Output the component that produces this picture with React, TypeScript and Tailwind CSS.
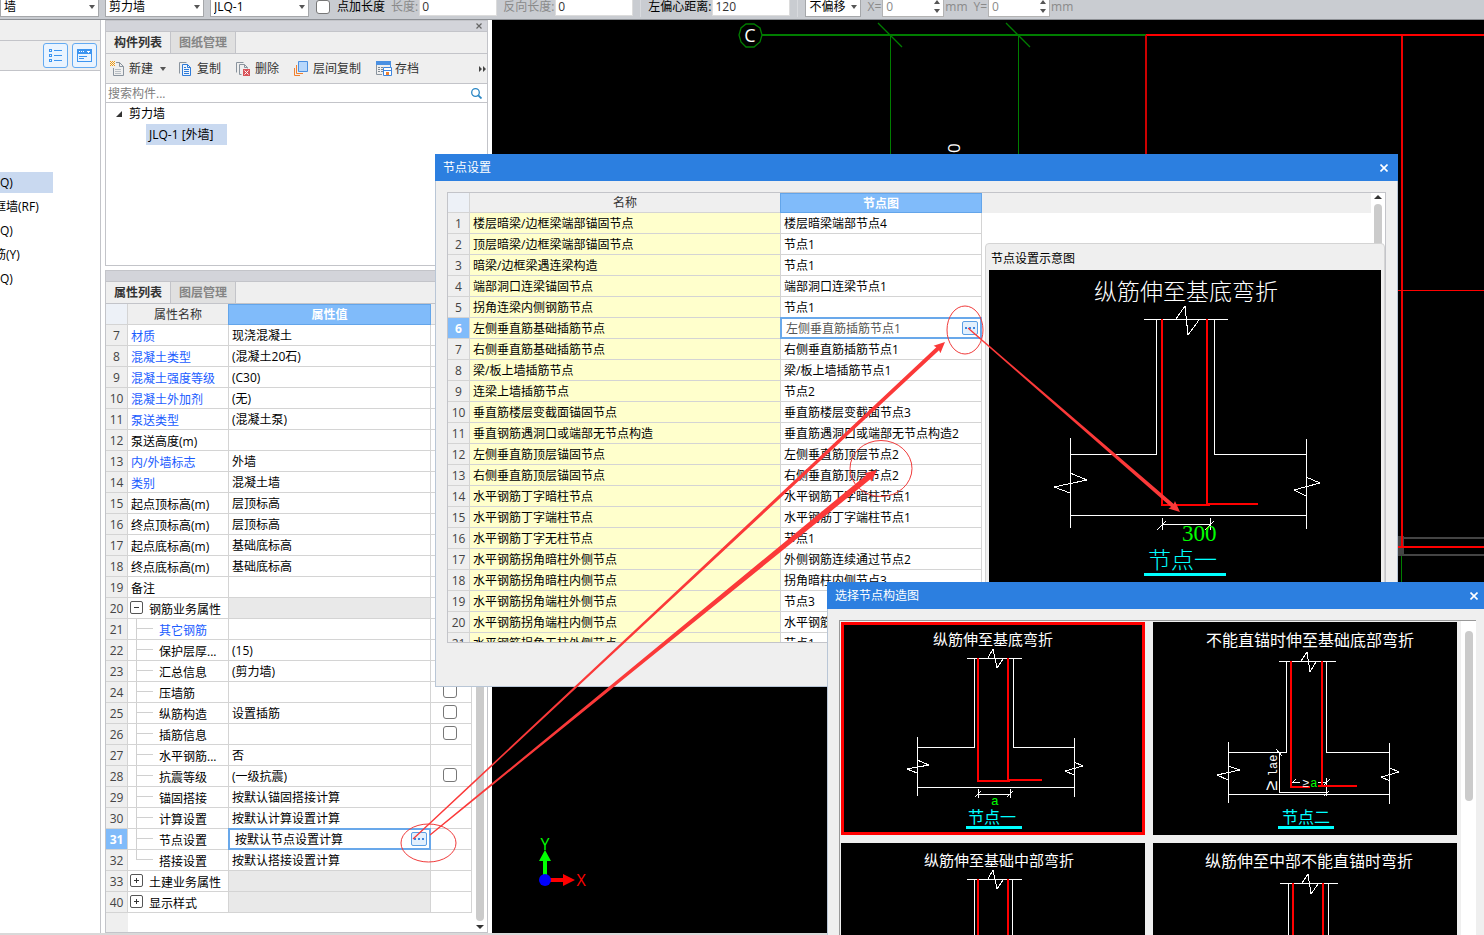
import type { ReactNode } from "react";

type PropertyRow = {
  no: number;
  name: string;
  value?: string;
  link?: boolean;
  group?: "open" | "closed";
  child?: boolean;
  last?: boolean;
  check?: boolean;
  selected?: boolean;
};

const properties: PropertyRow[] = [
  { no: 7, name: "材质", value: "现浇混凝土", link: true },
  { no: 8, name: "混凝土类型", value: "(混凝土20石)", link: true },
  { no: 9, name: "混凝土强度等级", value: "(C30)", link: true },
  { no: 10, name: "混凝土外加剂", value: "(无)", link: true },
  { no: 11, name: "泵送类型", value: "(混凝土泵)", link: true },
  { no: 12, name: "泵送高度(m)" },
  { no: 13, name: "内/外墙标志", value: "外墙", link: true },
  { no: 14, name: "类别", value: "混凝土墙", link: true },
  { no: 15, name: "起点顶标高(m)", value: "层顶标高" },
  { no: 16, name: "终点顶标高(m)", value: "层顶标高" },
  { no: 17, name: "起点底标高(m)", value: "基础底标高" },
  { no: 18, name: "终点底标高(m)", value: "基础底标高" },
  { no: 19, name: "备注" },
  { no: 20, name: "钢筋业务属性", group: "open" },
  { no: 21, name: "其它钢筋", link: true, child: true },
  { no: 22, name: "保护层厚...", value: "(15)", child: true },
  { no: 23, name: "汇总信息", value: "(剪力墙)", child: true },
  { no: 24, name: "压墙筋", child: true, check: true },
  { no: 25, name: "纵筋构造", value: "设置插筋", child: true, check: true },
  { no: 26, name: "插筋信息", child: true, check: true },
  { no: 27, name: "水平钢筋...", value: "否", child: true },
  { no: 28, name: "抗震等级", value: "(一级抗震)", child: true, check: true },
  { no: 29, name: "锚固搭接", value: "按默认锚固搭接计算", child: true },
  { no: 30, name: "计算设置", value: "按默认计算设置计算", child: true },
  { no: 31, name: "节点设置", value: "按默认节点设置计算", child: true, selected: true },
  { no: 32, name: "搭接设置", value: "按默认搭接设置计算", child: true, last: true },
  { no: 33, name: "土建业务属性", group: "closed" },
  { no: 40, name: "显示样式", group: "closed" },
];

const nodes = [
  ["楼层暗梁/边框梁端部锚固节点", "楼层暗梁端部节点4"],
  ["顶层暗梁/边框梁端部锚固节点", "节点1"],
  ["暗梁/边框梁遇连梁构造", "节点1"],
  ["端部洞口连梁锚固节点", "端部洞口连梁节点1"],
  ["拐角连梁内侧钢筋节点", "节点1"],
  ["左侧垂直筋基础插筋节点", "左侧垂直筋插筋节点1"],
  ["右侧垂直筋基础插筋节点", "右侧垂直筋插筋节点1"],
  ["梁/板上墙插筋节点", "梁/板上墙插筋节点1"],
  ["连梁上墙插筋节点", "节点2"],
  ["垂直筋楼层变截面锚固节点", "垂直筋楼层变截面节点3"],
  ["垂直钢筋遇洞口或端部无节点构造", "垂直筋遇洞口或端部无节点构造2"],
  ["左侧垂直筋顶层锚固节点", "左侧垂直筋顶层节点2"],
  ["右侧垂直筋顶层锚固节点", "右侧垂直筋顶层节点2"],
  ["水平钢筋丁字暗柱节点", "水平钢筋丁字暗柱节点1"],
  ["水平钢筋丁字端柱节点", "水平钢筋丁字端柱节点1"],
  ["水平钢筋丁字无柱节点", "节点1"],
  ["水平钢筋拐角暗柱外侧节点", "外侧钢筋连续通过节点2"],
  ["水平钢筋拐角暗柱内侧节点", "拐角暗柱内侧节点3"],
  ["水平钢筋拐角端柱外侧节点", "节点3"],
  ["水平钢筋拐角端柱内侧节点", "水平钢筋拐角端柱内侧节点1"],
  ["水平钢筋拐角无柱外侧节点", "节点1"],
];

const Caret = ({ up = false }: { up?: boolean }) => (
  <svg width="6" height="4" viewBox="0 0 6 4" className="shrink-0 fill-[#555]">
    <path d={up ? "M0 4L3 0L6 4Z" : "M0 0H6L3 4Z"} />
  </svg>
);

const ToolSelect = ({ label, value, className }: { label: string; value: string; className: string }) => (
  <div className={`relative flex shrink-0 items-center ${className}`}>
    <select
      aria-label={label}
      className="h-[21px] w-full appearance-none border border-[#a5a7aa] bg-white pl-[3px] leading-[19px] text-black"
    >
      <option>{value}</option>
    </select>
    <span className="pointer-events-none absolute right-[4px]">
      <Caret />
    </span>
  </div>
);

const ToolInput = ({ label, value, dim = false }: { label: string; value: string; dim?: boolean }) => (
  <label className={`flex shrink-0 items-center ${dim ? "text-[#8a8a8a]" : "text-black"}`}>
    {label}
    <input
      defaultValue={value}
      className="ml-px h-[18px] w-[78px] border border-[#dcdcdc] bg-white pl-[2px] text-[#333]"
    />
  </label>
);

const SpinInput = ({ label, value }: { label: string; value: string }) => (
  <label className="flex shrink-0 items-center text-[#8a8a8a]">
    {label}=
    <span className="relative ml-px flex items-center">
      <input defaultValue={value} className="h-[21px] w-[62px] border border-[#b3b3b3] bg-white pl-[3px]" />
      <span className="pointer-events-none absolute right-[4px] flex flex-col gap-[5px]">
        <Caret up />
        <Caret />
      </span>
    </span>
    <span className="ml-px">mm</span>
  </label>
);

const TopBar = () => (
  <header className="flex h-[20px] shrink-0 items-end overflow-hidden border-b border-[#8d9095] bg-[#c9ccd1] pb-[2px]">
    <div className="flex h-[21px] shrink-0 items-center gap-[6px]">
      <ToolSelect label="构件类型" value="墙" className="w-[99px]" />
      <ToolSelect label="构件类别" value="剪力墙" className="w-[99px]" />
      <ToolSelect label="构件名称" value="JLQ-1" className="w-[99px]" />
      <label className="flex shrink-0 items-center gap-[7px] pl-px">
        <input type="checkbox" className="h-[14px] w-[14px] appearance-none rounded-[3px] border border-[#777] bg-white" />
        点加长度
      </label>
      <ToolInput label="长度:" value="0" dim />
      <ToolInput label="反向长度:" value="0" dim />
      <span className="mx-px h-full w-px bg-[#d8dade]" />
      <ToolInput label="左偏心距离:" value="120" />
      <span className="mx-px h-full w-px bg-[#d8dade]" />
      <ToolSelect label="偏移方式" value="不偏移" className="w-[56px]" />
      <SpinInput label="X" value="0" />
      <SpinInput label="Y" value="0" />
    </div>
  </header>
);

const CategoryPanel = () => (
  <aside className="flex w-[101px] shrink-0 flex-col border-r border-[#c3c4c9] bg-white">
    <div className="h-[21px] border-b border-[#c3c4c9] bg-[#efefef]" />
    <div className="flex h-[30px] items-center justify-end gap-[4px] border-b border-[#c3c4c9] bg-[#efefef] pr-[3px]">
      <button aria-label="列表视图" className="flex h-[25px] w-[25px] items-center justify-center rounded-[3px] border border-[#63aaf2] bg-[#eaf4ff]">
        <svg width="13" height="14" viewBox="0 0 13 14" fill="none" stroke="#3d95f0" shapeRendering="crispEdges">
          <path d="M.5.5h2v2h-2zM.5 5.5h2v2h-2zM.5 10.5h2v2h-2zM5 1.5h8M5 6.5h8M5 11.5h8" />
        </svg>
      </button>
      <button aria-label="卡片视图" className="flex h-[25px] w-[25px] items-center justify-center rounded-[3px] border border-[#63aaf2] bg-[#eaf4ff]">
        <svg width="15" height="13" viewBox="0 0 15 13" fill="none" stroke="#3d95f0" shapeRendering="crispEdges">
          <path d="M.5.5h14v12h-14z" />
          <path d="M1 1h13v4H1z" fill="#3d95f0" stroke="none" />
          <path d="M2 2.500h1M4 2.500h1M6 2.500h1M10 2.500h3M11 3.500h1" stroke="#fff" />
          <path d="M2 7.500h8M2 9.500h5" />
        </svg>
      </button>
    </div>
    <ul className="mt-[101px] -ml-[6px] overflow-hidden leading-[21px]">
      <li className="mb-[3px] h-[21px] w-[59px] bg-[#c9d9f0] pl-[6px]">Q)</li>
      <li className="mb-[3px] h-[21px]">框墙(RF)</li>
      <li className="mb-[3px] h-[21px] pl-[6px]">Q)</li>
      <li className="mb-[3px] h-[21px]">筋(Y)</li>
      <li className="h-[21px] pl-[6px]">Q)</li>
    </ul>
  </aside>
);

const PanelTabs = ({ tabs, closable = false }: { tabs: string[]; closable?: boolean }) => (
  <>
    <div className="flex h-[11px] shrink-0 items-center justify-end border-b border-[#c3c4c9] bg-[#d3d4da] pr-[5px]">
      {closable && (
        <button aria-label="关闭面板">
          <svg width="6" height="6" viewBox="0 0 6 6" stroke="#666" strokeWidth="1.2">
            <path d="M.5.5L5.5 5.5M5.5.5L.5 5.5" />
          </svg>
        </button>
      )}
    </div>
    <div className="flex h-[22px] shrink-0 border-b border-[#c3c4c9] bg-[#efefef] font-bold">
      <button className="w-[65px] border-r border-[#c3c4c9] text-[#333]">{tabs[0]}</button>
      <button className="w-[65px] border-r border-[#c3c4c9] bg-[#e0e0e0] text-[#858585]">{tabs[1]}</button>
    </div>
  </>
);

const NewIcon = () => (
  <svg width="16" height="16" viewBox="0 0 16 16" fill="none">
    <path d="M3.500 7v7.500h10V5.500l-4-4H6" stroke="#8a949e" />
    <path d="M9.500 1.500v4h4" stroke="#8a949e" />
    <path d="M5 8.500h6M5 10.500h6M5 12.500h6" stroke="#b8bec4" />
    <path d="M0 .5h1M2 .5h1M4 .5h1M1 1.500h1M3 1.500h1M0 2.500h1M2 2.500h1M4 2.500h1M1 3.500h1M3 3.500h1M0 4.500h1M2 4.500h1M4 4.500h1" stroke="#f09a10" />
  </svg>
);

const CopyIcon = () => (
  <svg width="16" height="16" viewBox="0 0 16 16" fill="none">
    <path d="M1.500 12.500v-11h7" stroke="#8a949e" />
    <path d="M4.500 3.500h5l3 3v8h-8z" stroke="#2f7bd8" fill="#eef5fd" />
    <path d="M9.500 3.500v3h3M6 8.500h5M6 10.500h5M6 12.500h5M6 6.500h2" stroke="#2f7bd8" />
  </svg>
);

const DeleteIcon = () => (
  <svg width="16" height="16" viewBox="0 0 16 16" fill="none">
    <path d="M.5 11.500v-10h7M3.500 13.500v-10h5l3 3v1M3.500 13.500h2M8.500 3.500v3h3" stroke="#8a949e" />
    <path d="M7 8h7v7H7z" fill="#d9545a" />
    <path d="M8.500 9.500l4 4M12.500 9.500l-4 4" stroke="#fff" />
  </svg>
);

const LayerIcon = () => (
  <svg width="16" height="16" viewBox="0 0 16 16" fill="none">
    <path d="M4.500.5h9v10h-9z" fill="#b7d7fb" stroke="#4a8fe0" />
    <path d="M2.500 4v8.500H9" stroke="#f08030" />
    <path d="M.5 7v7.500H6" stroke="#f08030" />
  </svg>
);

const ArchiveIcon = () => (
  <svg width="16" height="16" viewBox="0 0 16 16" fill="none">
    <path d="M.5 1v12.500H6" stroke="#8a949e" />
    <path d="M0 0h15v4H0z" fill="#4a90e2" />
    <path d="M14.500 4v2" stroke="#4a90e2" />
    <path d="M2 6.500h5M2 8.500h5M2 10.500h5" stroke="#7d8790" strokeDasharray="2 1" />
    <path d="M7.500 6.500h8v8h-8z" fill="#fff" stroke="#3f86de" />
    <path d="M8 9.500h7" stroke="#3f86de" />
    <path d="M10 11h3v3h-3z" fill="#f08030" />
  </svg>
);

const ToolButton = ({ icon, children }: { icon: ReactNode; children: ReactNode }) => (
  <button className="flex shrink-0 items-center gap-[3px] text-[#333]">
    {icon}
    {children}
  </button>
);

const ComponentPanel = () => (
  <section className="flex h-[246px] shrink-0 flex-col border border-[#c3c4c9] bg-white">
    <PanelTabs tabs={["构件列表", "图纸管理"]} closable />
    <div className="flex h-[30px] shrink-0 items-center gap-[15px] border-b border-[#c3c4c9] bg-[#efefef] pl-[4px]">
      <ToolButton icon={<NewIcon />}>
        新建
        <span className="ml-[4px] -mr-[3px]">
          <Caret />
        </span>
      </ToolButton>
      <ToolButton icon={<CopyIcon />}>复制</ToolButton>
      <ToolButton icon={<DeleteIcon />}>删除</ToolButton>
      <ToolButton icon={<LayerIcon />}>层间复制</ToolButton>
      <ToolButton icon={<ArchiveIcon />}>存档</ToolButton>
      <button aria-label="更多" className="ml-auto">
        <svg width="8" height="6" viewBox="0 0 8 6" className="fill-[#444]">
          <path d="M0 0L3 3L0 6ZM4 0L7 3L4 6Z" />
        </svg>
      </button>
    </div>
    <div className="flex h-[19px] shrink-0 items-center border-b border-[#c3c4c9] pr-[5px]">
      <input
        aria-label="搜索构件"
        placeholder="搜索构件..."
        className="h-[18px] min-w-0 flex-1 pt-[2px] pl-[2px] outline-none placeholder:text-[#808080]"
      />
      <button aria-label="搜索">
        <svg width="11" height="11" viewBox="0 0 11 11" fill="none" stroke="#2a86c4">
          <circle cx="4.500" cy="4.500" r="3.800" strokeWidth="1.300" />
          <path d="M7.300 7.300L10.500 10.500" strokeWidth="1.800" />
        </svg>
      </button>
    </div>
    <ul className="leading-[21px]">
      <li className="flex items-center gap-[7px] pl-[10px]">
        <svg width="6" height="6" viewBox="0 0 6 6" className="fill-[#333]">
          <path d="M6 0V6H0Z" />
        </svg>
        剪力墙
      </li>
      <li className="ml-[40px] w-[81px] bg-[#c9d9f0] pl-[3px]">JLQ-1 [外墙]</li>
    </ul>
  </section>
);

const EllipsisButton = () => (
  <button
    aria-label="选择"
    className="flex h-[14px] w-[16px] shrink-0 items-center justify-center rounded-[2px] border border-[#5b9fe4] bg-[#e3f0fd]"
  >
    <svg width="10" height="2" viewBox="0 0 10 2" className="fill-[#3f86de]">
      <path d="M0 0h2v2H0zM4 0h2v2H4zM8 0h2v2H8z" />
    </svg>
  </button>
);

const TreeLines = ({ last = false }: { last?: boolean }) => (
  <svg width="31" height="20" viewBox="0 0 31 20" fill="none" stroke="#d0d0d0" shapeRendering="crispEdges" className="shrink-0">
    <path d={last ? "M8.500 0V9.500H25" : "M8.500 0V20M8.500 9.500H25"} />
  </svg>
);

const PropertyName = ({ row }: { row: PropertyRow }) => (
  <div className={`flex h-[20px] items-center whitespace-nowrap ${row.link ? "text-[#1a5cff]" : "text-black"}`}>
    {row.child && <TreeLines last={row.last} />}
    {row.group && (
      <button
        aria-label={row.group === "open" ? "收起" : "展开"}
        className="mr-[6px] mb-[2px] ml-[2px] flex h-[13px] w-[13px] items-center justify-center rounded-[2px] border border-[#555]"
      >
        <svg width="5" height="5" viewBox="0 0 5 5" stroke="#333" shapeRendering="crispEdges">
          <path d={row.group === "open" ? "M0 2.500H5" : "M0 2.500H5M2.500 0V5"} />
        </svg>
      </button>
    )}
    <span className={row.child || row.group ? "pt-[2px]" : "pt-[2px] pl-[3px]"}>{row.name}</span>
  </div>
);

const PropertyPanel = () => (
  <section className="flex min-h-0 flex-1 flex-col border border-[#c3c4c9] bg-white">
    <PanelTabs tabs={["属性列表", "图层管理"]} />
    <div className="flex min-h-0 flex-1 overflow-hidden">
      <div className="flex flex-1 flex-col">
        <table className="w-[366px] table-fixed border-separate border-spacing-0 leading-[19px]">
          <colgroup>
            <col className="w-[22px]" />
            <col className="w-[101px]" />
            <col className="w-[202px]" />
            <col className="w-[41px]" />
          </colgroup>
          <thead>
            <tr className="h-[21px]">
              <th className="border-r border-b border-[#d4d4d4] bg-[#edf1f7] p-0" />
              <th className="border-r border-b border-[#d4d4d4] bg-[#efefef] p-0 pt-px font-normal text-[#333]">属性名称</th>
              <th className="p-0 font-bold text-white">
                <div className="-ml-px h-[21px] border border-[#63a5ea] bg-[#80bbfa]">属性值</div>
              </th>
              <th className="border-r border-b border-[#d4d4d4] bg-[#efefef] p-0" />
            </tr>
          </thead>
          <tbody>
            {properties.map((row) => (
              <tr key={row.no} className="h-[21px]">
                <td
                  className={`border-r border-b border-[#d4d4d4] p-0 pt-px text-center ${
                    row.selected ? "bg-[#80bbfa] font-bold text-white" : "bg-[#efefef] text-[#444]"
                  }`}
                >
                  {row.no}
                </td>
                <td className="border-r border-b border-[#d4d4d4] p-0">
                  <PropertyName row={row} />
                </td>
                {row.selected ? (
                  <td className="p-0">
                    <div className="-mt-px -ml-px flex h-[22px] items-center border-2 border-[#69a8ea] pr-[2px] pl-[5px]">
                      <input aria-label={row.name} defaultValue={row.value} className="h-[18px] min-w-0 flex-1 pt-px outline-none" />
                      <EllipsisButton />
                    </div>
                  </td>
                ) : (
                  <td className={`border-r border-b border-[#d4d4d4] p-0 pt-px pl-[3px] ${row.group ? "bg-[#e9e9e9]" : ""}`}>
                    {row.value}
                  </td>
                )}
                <td className="border-r border-b border-[#d4d4d4] p-0">
                  {row.check && (
                    <input
                      type="checkbox"
                      aria-label={row.name}
                      className="mb-[2px] ml-[12px] block h-[14px] w-[14px] appearance-none rounded-[3px] border border-[#777]"
                    />
                  )}
                </td>
              </tr>
            ))}
          </tbody>
        </table>
        <div className="w-[22px] flex-1 bg-[#efefef]" />
      </div>
      <div className="flex w-[15px] shrink-0 flex-col items-center gap-[4px] pb-[3px]">
        <div className="w-[8px] flex-1 rounded-b-full bg-[#cbcbcb]" />
        <svg width="8" height="4" viewBox="0 0 8 4" className="fill-[#333]">
          <path d="M0 0H8L4 4Z" />
        </svg>
      </div>
    </div>
  </section>
);

const ModelCanvas = () => (
  <main className="min-w-0 flex-1 overflow-hidden bg-black">
    <svg width="992" height="913" viewBox="492 20 992 913" fill="none" className="font-['Open_Sans',sans-serif]">
      <g stroke="#007d00">
        <path d="M762 35H1146" strokeWidth="2" />
        <path d="M890.500 35V160M1018.500 35V160M1401.500 546V600" />
        <path d="M878 23L902 47M1006 23L1030 47" strokeWidth="1.300" />
        <path d="M746 24h8l6 4l2 7l-2 7l-6 5h-8l-5-5l-2-7l2-7z" strokeWidth="1.300" />
      </g>
      <text x="750" y="42" textAnchor="middle" fontSize="18" fill="#fff">C</text>
      <text transform="translate(960 153) rotate(-90)" fontSize="17" fill="#fff">0</text>
      <path d="M1398 536h6v20h-6z" fill="#444" />
      <path d="M1404 538H1484M1404 555H1484" stroke="#444" strokeWidth="2" />
      <g stroke="#f00" shapeRendering="crispEdges">
        <path d="M1146 35H1484" strokeWidth="2" />
        <path d="M1146 35V160" stroke="#c00" strokeWidth="2" />
        <path d="M1402 36V546" stroke="#e00" strokeWidth="2" />
        <path d="M1390 290.500H1484" />
        <path d="M1390 546.500H1484" strokeWidth="2" />
      </g>
      <path d="M543 876V861h-4L545 850l6 11h-4v15z" fill="#0f0" />
      <path d="M549 878h14v-4l12 6l-12 6v-4h-14z" fill="#f00" />
      <circle cx="545" cy="880" r="6" fill="#00f" />
      <text x="545" y="850" textAnchor="middle" fontSize="16" fill="#0f0">Y</text>
      <text x="581" y="886" textAnchor="middle" fontSize="16" fill="#f00">X</text>
    </svg>
  </main>
);

type DialogProps = { title: string; className: string; children: ReactNode };

const Dialog = ({ title, className, children }: DialogProps) => (
  <div role="dialog" aria-label={title} className={`absolute flex flex-col bg-[#efefef] ${className}`}>
    <div className="flex h-[27px] shrink-0 items-center justify-between bg-[#2c7fe0] pr-[10px] pl-[8px] text-white">
      <h2 className="pt-px">{title}</h2>
      <button aria-label="关闭">
        <svg width="8" height="8" viewBox="0 0 8 8" stroke="#fff" strokeWidth="1.600">
          <path d="M.5.5L7.500 7.500M7.500.5L.5 7.500" />
        </svg>
      </button>
    </div>
    <div className="flex-1 border-x border-b border-[#b9c6d6] px-[11px] pt-[11px]">{children}</div>
  </div>
);

const NodePreview = () => (
  <svg width="392" height="364" viewBox="0 0 392 364" fill="none" className="bg-black font-['Noto_Sans_CJK_SC',sans-serif]">
    <text x="105" y="30" fontSize="23" fill="#fff" className="font-light">纵筋伸至基底弯折</text>
    <g stroke="#fff" shapeRendering="crispEdges">
      <path d="M155 49.500H239M167.500 49V184.500H81M225.500 49V184.500H318M81.500 168V258M317.500 169V259M81 245.500H318" />
      <path d="M173.500 248V260M221.500 248V260M173 254.500H222M168 260l9-9M216 260l9-9" />
      <path d="M187 49L196 36L199 65L210 50M81 203l17 7l-33 7l16 6M317 207l14 6l-26 7l12 6" />
    </g>
    <path d="M173 49V235H221M218 49V234H269" stroke="#f00" strokeWidth="2" shapeRendering="crispEdges" />
    <text x="193" y="271" fontSize="23" fill="#0f0" className="font-['Liberation_Serif',serif]">300</text>
    <text x="159" y="298" fontSize="23" fill="#0ff" className="font-light">节点一</text>
    <path d="M155 304.500H237" stroke="#0ff" strokeWidth="3" />
  </svg>
);

const NodeDialog = () => (
  <Dialog title="节点设置" className="top-[154px] left-[435px] h-[533px] w-[963px]">
    <div className="relative flex h-[451px] overflow-hidden border border-[#c3c4c9] bg-white">
      <table className="w-[534px] shrink-0 table-fixed self-start border-separate border-spacing-0 leading-[19px]">
        <colgroup>
          <col className="w-[22px]" />
          <col className="w-[311px]" />
          <col className="w-[201px]" />
        </colgroup>
        <thead>
          <tr className="h-[20px]">
            <th className="border-r border-b border-[#d4d4d4] bg-[#edf1f7] p-0" />
            <th className="border-r border-b border-[#d4d4d4] bg-[#efefef] p-0 pt-px leading-[18px] font-normal text-[#333]">名称</th>
            <th className="p-0 font-bold text-white">
              <div className="-ml-px h-[20px] border border-[#63a5ea] bg-[#80bbfa]">节点图</div>
            </th>
          </tr>
        </thead>
        <tbody>
          {nodes.map(([name, value], i) => {
            const selected = i === 5;
            return (
              <tr key={name} className="h-[21px]">
                <td
                  className={`border-r border-b border-[#d4d4d4] p-0 pt-px text-center ${
                    selected ? "bg-[#80bbfa] font-bold text-white" : "bg-[#efefef] text-[#444]"
                  }`}
                >
                  {i + 1}
                </td>
                <td className="border-r border-b border-[#d4d4d4] bg-[#ffffcc] p-0 pt-px pl-[3px]">{name}</td>
                {selected ? (
                  <td className="p-0">
                    <div className="-mt-px -ml-px flex h-[22px] items-center border-2 border-[#69a8ea] pr-[2px] pl-[4px]">
                      <input aria-label={name} defaultValue={value} className="h-[18px] min-w-0 flex-1 pt-px text-[#555] outline-none" />
                      <EllipsisButton />
                    </div>
                  </td>
                ) : (
                  <td className="border-r border-b border-[#d4d4d4] p-0 pt-px pl-[3px] whitespace-nowrap">{value}</td>
                )}
              </tr>
            );
          })}
        </tbody>
      </table>
      <div className="h-[20px] flex-1 bg-[#efefef]" />
      <div className="flex w-[14px] shrink-0 flex-col items-center gap-[5px] pt-[2px]">
        <svg width="8" height="4" viewBox="0 0 8 4" className="fill-[#333]">
          <path d="M0 4L4 0L8 4Z" />
        </svg>
        <div className="w-[8px] flex-1 rounded-t-full bg-[#cbcbcb]" />
      </div>
      {/* preview floats above the empty part of the table */}
      <div className="absolute top-[50px] right-0 bottom-0 w-[400px] rounded-t-[4px] border border-[#d4d4d4] bg-[#efefef] px-[3px]">
        <p className="h-[26px] pl-[2px] leading-[30px]">节点设置示意图</p>
        <NodePreview />
      </div>
    </div>
  </Dialog>
);

type Section = {
  title: string;
  titleX: number;
  size: number;
  outline: string;
  rebar: string;
  caption?: string;
};

const sections: Section[] = [
  {
    title: "纵筋伸至基底弯折",
    titleX: 92,
    size: 15,
    outline:
      "M126 36.500H181M147 36L152 27L156 46L162 37M133.500 36V125.500H76M172.500 36V125.500H234M76.500 115V174M233.500 116V175M76 165.500H234M76 138l12 5l-22 4l10 4M233 140l9 4l-18 5l9 4M137.500 167V176M169.500 167V176M137 172.500H170M134 175l6-6M166 175l6-6",
    rebar: "M137 36V159H169M167 36V158H201",
    caption: "节点一",
  },
  {
    title: "不能直锚时伸至基础底部弯折",
    titleX: 53,
    size: 16,
    outline:
      "M126 39.500H183M148 39L154 30L157 50L163 40M133.500 39V130.500H75M173.500 39V130.500H237M75.500 120V181M236.500 121V182M75 172.500H237M75 144l12 4l-23 5l11 5M237 146l9 4l-18 5l9 4M126.500 130V170.500H174M173.500 156V174M123 127l6 7M171 174l5-5M138 160.500H147M165 160.500H174M137 163l6-6M171 163l6-6",
    rebar: "M138 39V165H157M169 39V164M165 164H204",
    caption: "节点二",
  },
  {
    title: "纵筋伸至基础中部弯折",
    titleX: 83,
    size: 15,
    outline: "M126 36.500H181M147 36L152 27L156 46L162 37M133.500 36V125.500H76M171.500 36V125.500H234",
    rebar: "M137 36V145H169M167 36V144H201",
  },
  {
    title: "纵筋伸至中部不能直锚时弯折",
    titleX: 52,
    size: 16,
    outline: "M127 40.500H185M149 40L155 31L158 51L165 41M135.500 40V130.500H75M175.500 40V130.500H237",
    rebar: "M140 40V150H160M170 40V149H204",
  },
];

const SectionTile = ({ section, index }: { section: Section; index: number }) => (
  <button className="block h-[213px] w-[304px] bg-black">
    <svg width="304" height="213" viewBox="0 0 304 213" fill="none" className="font-['Noto_Sans_CJK_SC',sans-serif]">
      <text x={section.titleX} y={index % 2 ? 24 : 23} fontSize={section.size} fill="#fff">
        {section.title}
      </text>
      <path d={section.outline} stroke="#fff" shapeRendering="crispEdges" />
      <path d={section.rebar} stroke="#f00" strokeWidth="2" shapeRendering="crispEdges" />
      {index === 0 && (
        <text x="150" y="183" fontSize="13" fill="#0f0" className="font-['Liberation_Mono',monospace]">a</text>
      )}
      {index === 1 && (
        <g fontSize="12" fill="#fff" className="font-['Liberation_Mono',monospace]">
          <text x="149" y="165">
            ≥<tspan dx="1" fill="#0f0">a</tspan>
          </text>
          <text transform="translate(124 169) rotate(-90)">
            <tspan fontSize="18">≥</tspan>
            <tspan dx="4">lae</tspan>
          </text>
        </g>
      )}
      {section.caption && (
        <>
          <text x={index ? 129 : 127} y="201" fontSize="16" fill="#0ff">{section.caption}</text>
          <path d="M125 205.500H181" stroke="#0ff" strokeWidth="3" />
        </>
      )}
      {index === 0 && <path d="M1.500 1.500H302.500V211.500H1.500Z" stroke="#f00" strokeWidth="3" />}
    </svg>
  </button>
);

const ChooseDialog = () => (
  <Dialog title="选择节点构造图" className="top-[582px] left-[827px] h-[520px] w-[661px]">
    <div className="flex border-t border-l border-[#999]">
      <div className="grid flex-1 grid-cols-[304px_304px] gap-[8px] p-px">
        {sections.map((section, i) => (
          <SectionTile key={section.title} section={section} index={i} />
        ))}
      </div>
      <div className="flex w-[15px] justify-center bg-white pt-[10px]">
        <div className="h-[170px] w-[8px] rounded-full bg-[#cbcbcb]" />
      </div>
    </div>
  </Dialog>
);

// thin at the tail, widening up to the arrow head
const arrow = (x1: number, y1: number, x2: number, y2: number, body: number, head: number) => {
  const len = Math.hypot(x2 - x1, y2 - y1);
  const ux = (x2 - x1) / len;
  const uy = (y2 - y1) / len;
  const at = (d: number, side: number) => `${x1 + ux * d - uy * side},${y1 + uy * d + ux * side}`;
  const neck = len - head;
  return [
    at(0, 0.6),
    at(neck, body / 2),
    at(neck - 1, head / 2),
    at(len, 0),
    at(neck - 1, -head / 2),
    at(neck, -body / 2),
    at(0, -0.6),
  ].join(" ");
};

const Annotations = () => (
  <svg className="pointer-events-none absolute inset-0 h-full w-full" fill="none">
    <g stroke="#f03c3c">
      <ellipse cx="428.500" cy="843" rx="27.500" ry="19" />
      <ellipse cx="965" cy="330" rx="18" ry="24" />
      <ellipse cx="881" cy="468.500" rx="31" ry="28" />
    </g>
    <g fill="#fb3939">
      <polygon points={arrow(413, 839, 945, 342, 4, 10)} />
      <polygon points={arrow(430, 835, 877, 470, 6, 11)} />
      <polygon points={arrow(968, 328, 1180, 512, 4, 10)} />
    </g>
  </svg>
);

const App = () => {
  return (
    <div className="relative flex h-screen w-full flex-col overflow-hidden bg-white font-['Open_Sans','Noto_Sans_CJK_SC',sans-serif] text-[12px] text-black">
      <TopBar />
      <div className="flex min-h-0 flex-1">
        <CategoryPanel />
        <div className="mx-[4px] flex w-[383px] shrink-0 flex-col gap-[4px]">
          <ComponentPanel />
          <PropertyPanel />
        </div>
        <ModelCanvas />
      </div>
      <footer className="h-[2px] shrink-0 bg-[#d9d9d9]" />
      <NodeDialog />
      <ChooseDialog />
      <Annotations />
    </div>
  );
};

export default App;
